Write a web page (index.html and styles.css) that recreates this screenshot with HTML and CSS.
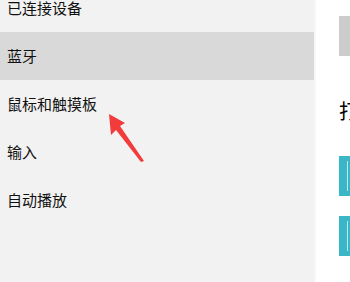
FILE: index.html
```html
<!DOCTYPE html>
<html lang="zh">
<head>
    <meta charset="UTF-8">
    <title>设备</title>
    <link rel="stylesheet" href="styles.css">
</head>
<body>
    <div class="settings">
        <ul class="nav">
            <li>已连接设备</li>
            <li class="active">蓝牙</li>
            <li>鼠标和触摸板</li>
            <li>输入</li>
            <li>自动播放</li>
        </ul>
        <div class="content">
            <div class="search"></div>
            <h2 class="title">打开蓝牙</h2>
            <div class="toggle"></div>
            <div class="toggle"></div>
        </div>
    </div>
    <!-- 红色箭头标注 -->
    <svg class="arrow" width="60" height="70" viewBox="0 0 60 70">
        <polygon points="14,14 16,35 21,30 46,62 49,61 25,26 30,23" fill="#f23b3b"/>
    </svg>
</body>
</html>
```
FILE: styles.css
```css
body {
    margin: 0;
    font-family: 'Noto Sans CJK SC', sans-serif;
    background: #fff;
    overflow: hidden;
}

.settings {
    display: flex;
    height: 282px;
}

/* 左侧菜单 */
.nav {
    list-style: none;
    margin: 0;
    padding: 0;
    width: 314px;
    border-right: 2px solid #f7f7f7;
    background: #f2f2f2;
}

.nav li {
    height: 48px;
    line-height: 48px;
    padding-left: 7px;
    font-size: 15px;
    color: #111;
}

.nav li:first-child {
    margin-top: -16px;
}

.nav li.active {
    background: #d9d9d9;
}

/* 右侧内容 */
.content {
    flex: 1;
    padding-left: 23px;
    overflow: hidden;
    white-space: nowrap;
}

.search {
    margin-top: 16px;
    height: 40px;
    background: #cccccc;
}

.title {
    margin: 41px 0 0;
    font-size: 20px;
    font-weight: normal;
    line-height: 28px;
    color: #000;
}

.toggle {
    height: 40px;
    margin-top: 31px;
    background: #3ab7c6;
    position: relative;
}

.toggle + .toggle {
    margin-top: 20px;
}

.toggle::after {
    content: '';
    position: absolute;
    left: 8px;
    top: 5px;
    width: 1px;
    height: 30px;
    background: #bfe8ee;
}

.arrow {
    position: absolute;
    left: 95px;
    top: 100px;
}
```
